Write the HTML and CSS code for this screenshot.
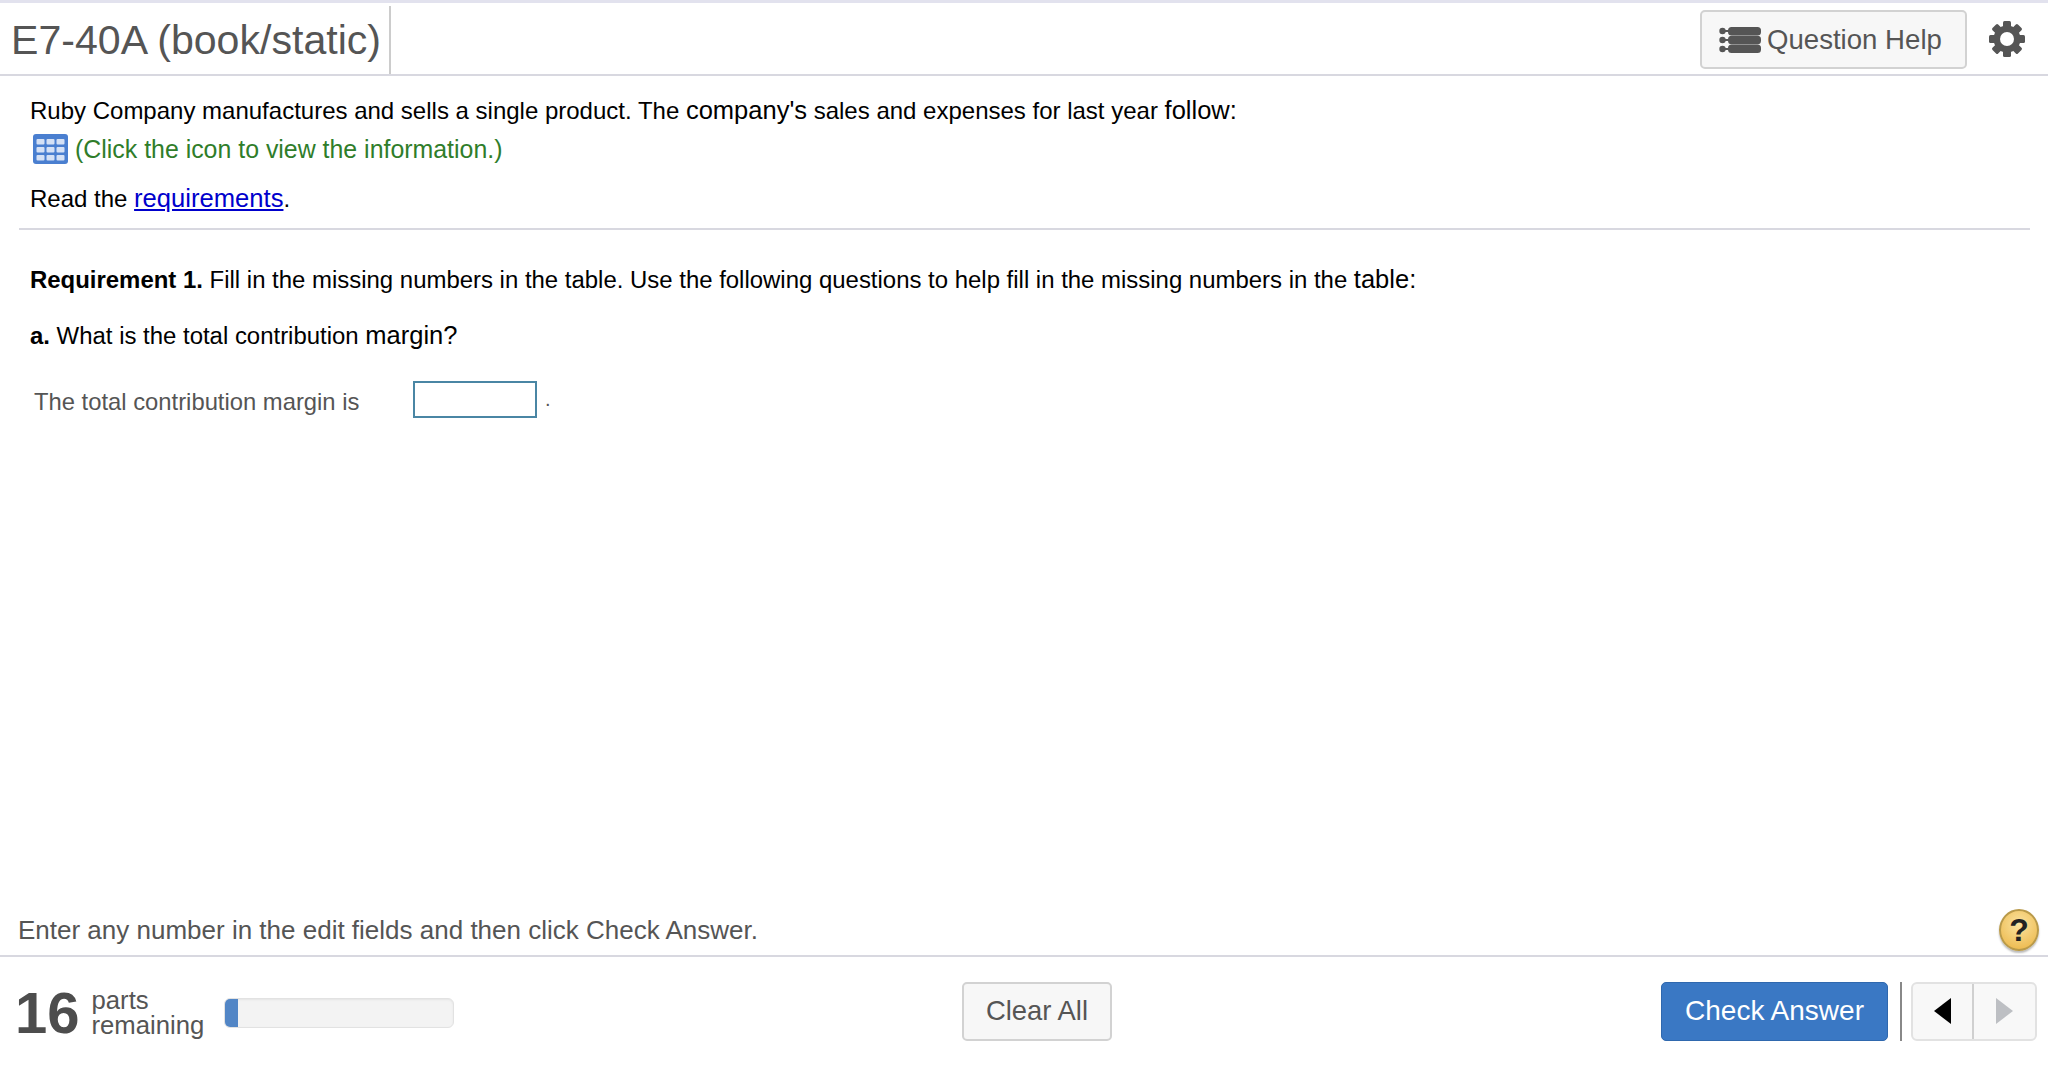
FILE: index.html
```html
<!DOCTYPE html>
<html lang="en">
<head>
<meta charset="utf-8">
<title>E7-40A (book/static)</title>
<link rel="stylesheet" href="styles.css">
</head>
<body>
<div class="page">
  <header class="topbar">
    <div class="title">E7-40A (book/static)</div>
    <div class="top-actions">
      <button class="btn help-btn">
        <svg class="list-icon" width="42" height="26" viewBox="0 0 42 26"><g fill="#555"><circle cx="3.5" cy="4" r="3.2"/><circle cx="3.5" cy="13" r="3.2"/><circle cx="3.5" cy="22" r="3.2"/><rect x="2" y="3" width="8" height="2"/><rect x="2" y="12" width="8" height="2"/><rect x="2" y="21" width="8" height="2"/><rect x="9" y="0" width="33" height="8.500" rx="3.500"/><rect x="9" y="8.800" width="33" height="8.500" rx="3.500"/><rect x="9" y="17.500" width="33" height="8.500" rx="3.500"/></g></svg>
        <span>Question Help</span>
      </button>
      <svg class="gear" width="36" height="36" viewBox="0 0 36 36"><g fill="#555"><circle cx="18" cy="18" r="13.500"/><rect x="14" y="0" width="8" height="36" rx="1.500"/><rect x="14" y="0" width="8" height="36" rx="1.500" transform="rotate(45 18 18)"/><rect x="14" y="0" width="8" height="36" rx="1.500" transform="rotate(90 18 18)"/><rect x="14" y="0" width="8" height="36" rx="1.500" transform="rotate(135 18 18)"/></g><circle cx="18" cy="18" r="7" fill="#fff"/></svg>
    </div>
  </header>

  <main class="content">
    <section class="intro">
      <p class="line">Ruby Company manufactures and sells a single product. The <span class="big">company's</span> sales and expenses for last year <span class="big">follow:</span></p>
      <p class="line info">
        <svg class="table-icon" width="35" height="30" viewBox="0 0 35 30"><rect width="35" height="30" rx="3" fill="#4a7fd0"/><g fill="#d5e1f5"><rect x="3.500" y="5" width="8" height="5.500" rx="1"/><rect x="13.500" y="5" width="8" height="5.500" rx="1"/><rect x="23.500" y="5" width="8" height="5.500" rx="1"/><rect x="3.500" y="13" width="8" height="5.500" rx="1"/><rect x="13.500" y="13" width="8" height="5.500" rx="1"/><rect x="23.500" y="13" width="8" height="5.500" rx="1"/><rect x="3.500" y="21" width="8" height="5.500" rx="1"/><rect x="13.500" y="21" width="8" height="5.500" rx="1"/><rect x="23.500" y="21" width="8" height="5.500" rx="1"/></g></svg>
        <span>(Click the icon to view the information.)</span>
      </p>
      <p class="line read">Read the <a href="#">requirements</a>.</p>
    </section>
    <section class="question">
      <p class="line"><b>Requirement 1.</b> Fill in the missing numbers in the table. Use the following questions to help fill in the missing numbers in the <span class="big">table:</span></p>
      <p class="line part"><b>a.</b> What is the total contribution <span class="big">margin?</span></p>
      <div class="answer">
        <span class="answer-label">The total contribution margin is</span>
        <input class="answer-input" type="text" aria-label="Total contribution margin">
        <span class="answer-dot">.</span>
      </div>
    </section>
  </main>

  <div class="hint">
    <span>Enter any number in the edit fields and then click Check Answer.</span>
    <span class="help-circle">?</span>
  </div>

  <footer class="footer">
    <div class="parts">
      <span class="count">16</span>
      <span class="parts-label">parts<br>remaining</span>
      <div class="progress"><div class="progress-fill"></div></div>
    </div>
    <button class="btn clear-btn">Clear All</button>
    <div class="footer-right">
      <button class="check-btn">Check Answer</button>
      <span class="divider"></span>
      <div class="pager">
        <button class="page-btn prev" aria-label="Previous"><span class="arrow-left"></span></button>
        <button class="page-btn next" aria-label="Next"><span class="arrow-right"></span></button>
      </div>
    </div>
  </footer>
</div>
</body>
</html>
```

FILE: styles.css
```css
* { box-sizing: border-box; }
html, body { margin: 0; height: 100%; background: #fff; }
body { font-family: "Liberation Sans", Arial, sans-serif; color: #000; }
p { margin: 0; }
.page { height: 1074px; display: flex; flex-direction: column; border-top: 3px solid #e2e2ee; }
.topbar { height: 73px; flex: none; display: flex; justify-content: space-between; align-items: center; border-bottom: 2px solid #d8d8e0; padding: 0 23px 0 11px; }
.title { font-size: 41.1px; color: #555; height: 68px; line-height: 68px; padding-right: 8px; border-right: 2px solid #ccc; align-self: flex-end; }
.top-actions { display: flex; align-items: center; gap: 22px; }
.btn { background: #f7f7f7; border: 2px solid #d2d2d2; border-radius: 5px; color: #555; font-family: inherit; }
.help-btn { width: 267px; height: 59px; margin-top: 2px; font-size: 27.6px; display: flex; align-items: center; gap: 6px; padding: 0 0 0 17px; }
.content { flex: 1; padding: 0 18px 0 19px; }
.intro { padding: 17px 11px 12px; border-bottom: 2px solid #d8d8e0; }
.line { font-size: 24px; line-height: 34px; }
.big { font-size: 25.5px; }
.info { color: #2f7d2a; font-size: 24.9px; display: flex; align-items: center; gap: 7px; margin-top: 4px; }
.table-icon { margin-left: 3px; }
.read { margin-top: 15px; }
a { color: #00c; font-size: 25.6px; }
.question { padding: 32px 11px 0; }
.question .line { font-size: 23.95px; }
.part { margin-top: 21px; }
.answer { display: flex; align-items: center; margin-top: 28px; padding-left: 4px; font-size: 23.8px; color: #555; }
.answer-label { width: 379px; padding-top: 4px; }
.answer-input { width: 124px; height: 37px; border: 2px solid #4a86a4; background: #fff; }
.answer-dot { margin-left: 8px; font-size: 20px; }
.hint { flex: none; display: flex; justify-content: space-between; align-items: center; height: 50px; padding: 0 9px 0 18px; font-size: 26px; color: #555; }
.help-circle { width: 40px; height: 42px; border-radius: 50%; background: radial-gradient(circle at 50% 35%, #fbe3a0, #eab341); border: 2px solid #b99a4a; box-shadow: 0 2px 2px #bbb; color: #222; font-weight: bold; font-size: 32px; display: flex; align-items: center; justify-content: center; }
.footer { flex: none; height: 119px; display: grid; grid-template-columns: 1fr auto 1fr; align-items: center; border-top: 2px solid #d8d8e0; padding: 0 11px 9px 15px; }
.parts { display: flex; align-items: center; padding-top: 3px; }
.count { font-size: 58px; font-weight: bold; color: #4d4d4d; line-height: 1; }
.parts-label { font-size: 25.7px; line-height: 25px; color: #555; margin-left: 12px; }
.progress { width: 230px; height: 30px; margin-left: 20px; border: 1px solid #e2e2e2; border-radius: 6px; background: #f3f3f3; box-shadow: inset 0 1px 2px #e4e4e4; overflow: hidden; }
.progress-fill { width: 13px; height: 100%; background: #5286c6; }
.clear-btn { width: 150px; height: 59px; margin-left: 22px; font-size: 27.4px; }
.footer-right { display: flex; align-items: center; justify-content: flex-end; }
.check-btn { width: 227px; height: 59px; background: #3a78c4; border: 1px solid #2f68ae; border-radius: 5px; color: #fff; font-size: 28px; font-family: inherit; }
.divider { width: 2px; height: 59px; background: #888; margin: 0 9px 0 12px; }
.pager { display: flex; height: 59px; border: 2px solid #e2e2e2; border-radius: 6px; background: #f8f8f8; overflow: hidden; }
.page-btn { width: 61px; border: 0; background: transparent; display: flex; align-items: center; justify-content: center; padding: 0; }
.prev { border-right: 2px solid #d0d0d0; }
.arrow-left { border-style: solid; border-width: 13px 17px 13px 0; border-color: transparent #000 transparent transparent; }
.arrow-right { border-style: solid; border-width: 13px 0 13px 17px; border-color: transparent transparent transparent #bdbfc3; }
```
